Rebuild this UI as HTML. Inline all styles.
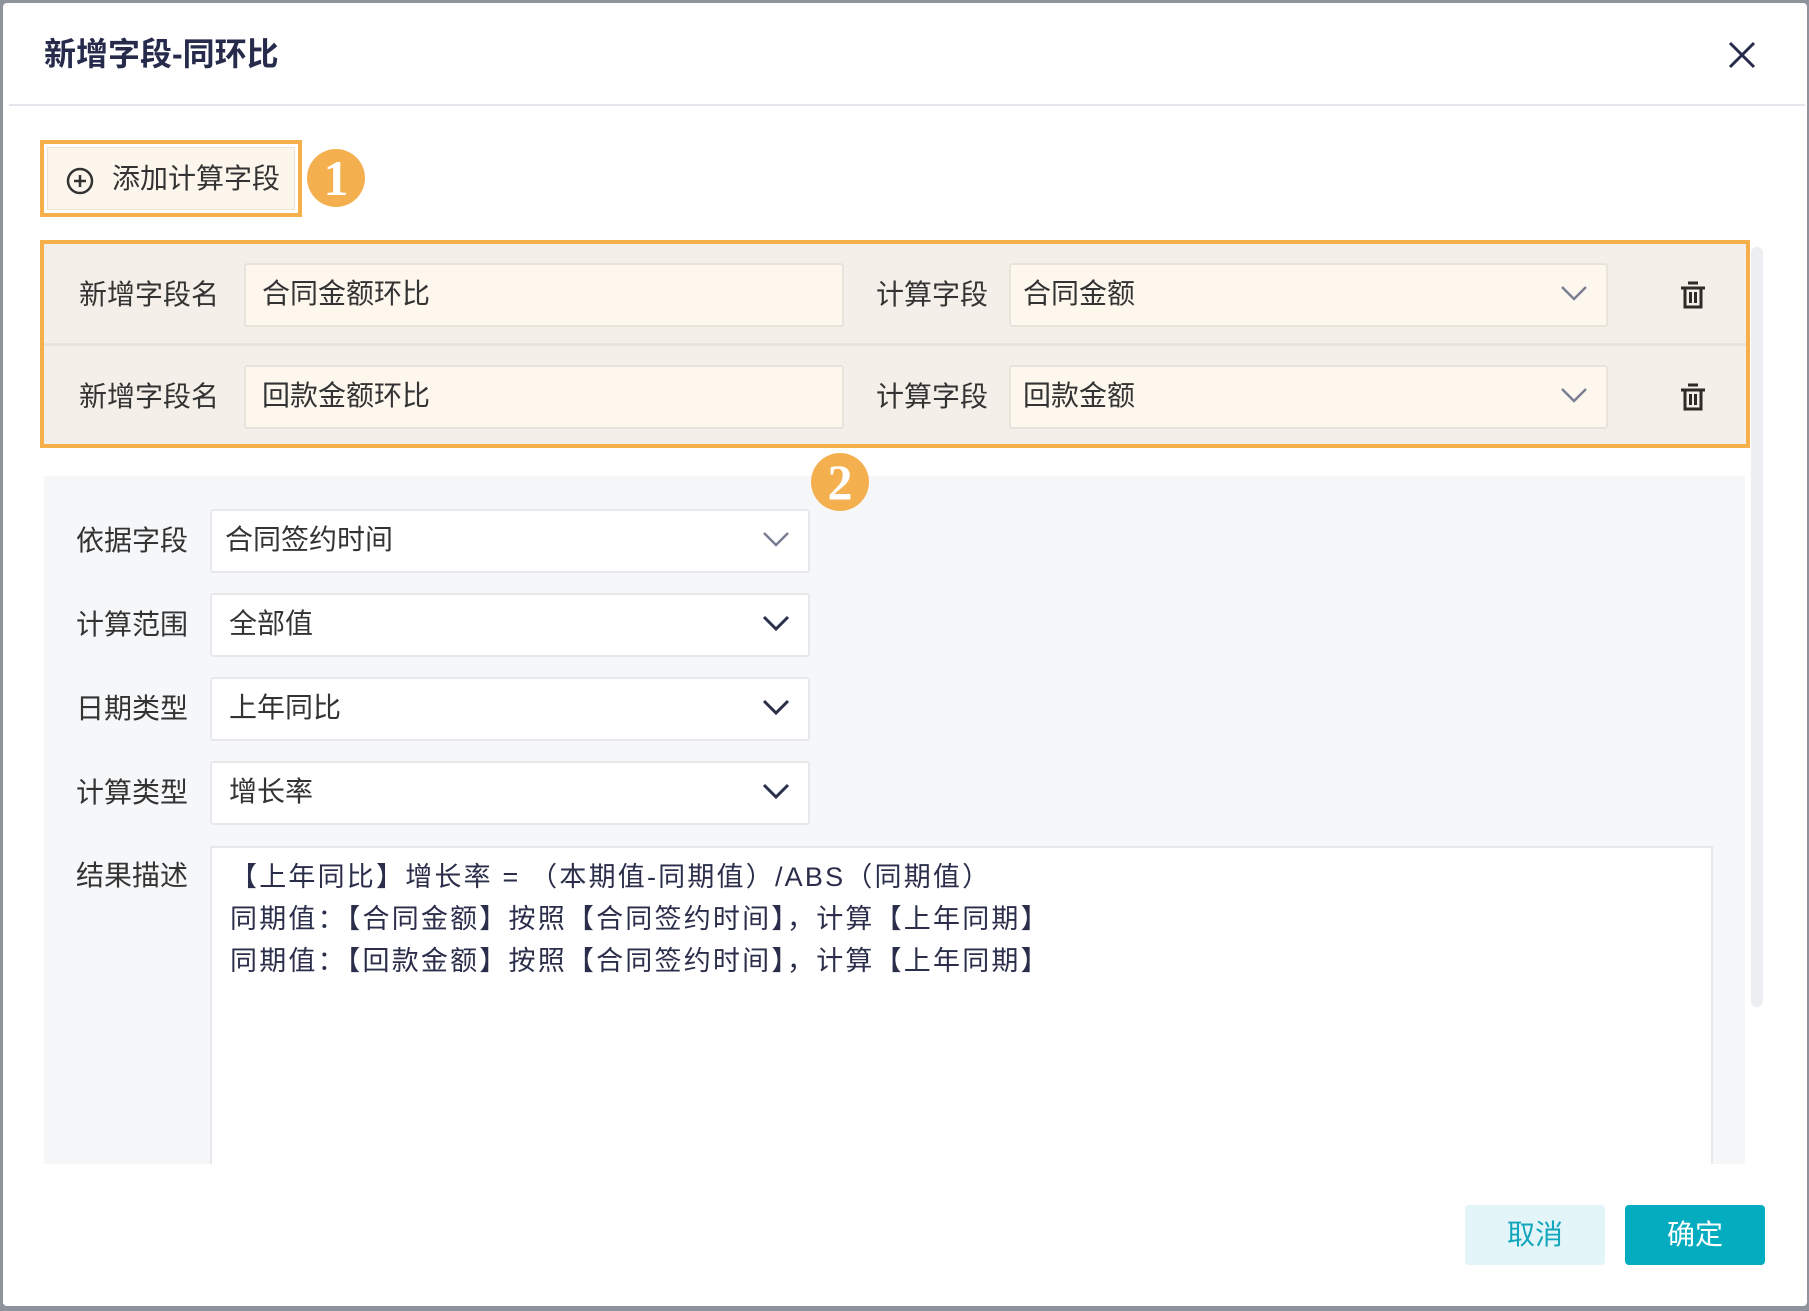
<!DOCTYPE html>
<html><head><meta charset="utf-8"><style>
*{box-sizing:border-box;margin:0;padding:0}
body{width:1809px;height:1311px;background:#8e939c;font-family:"Liberation Sans","Noto Sans CJK SC",sans-serif;position:relative;overflow:hidden}
.dlg{position:absolute;left:3px;top:3px;width:1804px;height:1303px;background:#fff;border-radius:4px}
.wrap{position:absolute;left:-3px;top:-3px;width:1809px;height:1306px}
.abs{position:absolute}
.title{left:44px;top:34px;font-size:32px;font-weight:bold;color:#262b4b;line-height:40px}
.hr{left:9px;top:104px;width:1796px;height:2px;background:#e4e5ea}
.add{left:40px;top:140px;width:262px;height:77px;border:4px solid #f5b04c;background:#fff}
.add .in{position:absolute;left:3px;top:3px;right:3px;bottom:3px;background:#fdf6ec;border:1px solid #ebe3d6;font-size:28px;color:#333;line-height:62px;padding-left:64px}
.badge{width:58px;height:58px;border-radius:50%;background:#f4b04f;color:#fff;font-family:"Liberation Serif",serif;font-weight:bold;font-size:50px;text-align:center;line-height:58px}
.box{left:40px;top:240px;width:1710px;height:208px;border:4px solid #f5b04c;background:#f4efe8}
.lbl{font-size:28px;color:#333;line-height:36px}
.inp{background:#fdf7ee;border:2px solid #e8e3db;border-radius:3px;font-size:28px;color:#333;line-height:58px;padding-left:16px}
.sel{background:#fff;border:2px solid #e6e8ec;border-radius:3px;font-size:28px;color:#333;line-height:58px;padding-left:14px}
.chev{position:absolute;right:18px;top:18px}
.panel{left:44px;top:476px;width:1701px;height:688px;background:#f6f7f9}
.ta{left:210px;top:846px;width:1503px;height:318px;background:#fff;border:2px solid #e6e8ec;border-bottom:none;font-size:27px;color:#2a2e4a;line-height:42px;padding:8px 0 0 18px;letter-spacing:2.2px;white-space:pre}
.btn{top:1205px;width:140px;height:60px;border-radius:4px;font-size:28px;text-align:center;line-height:60px}
</style></head><body>
<div class="dlg"><div class="wrap">
<div class="abs title">新增字段-同环比</div>
<svg class="abs" style="left:1727px;top:40px" width="30" height="30" viewBox="0 0 30 30"><path d="M3 3L27 27M27 3L3 27" stroke="#262b4b" stroke-width="3"/></svg>
<div class="abs hr"></div>

<div class="abs add"><div class="in">添加计算字段</div>
<svg class="abs" style="left:22px;top:23px" width="28" height="28" viewBox="0 0 28 28"><circle cx="14" cy="14" r="12" fill="none" stroke="#333" stroke-width="2.5"/><path d="M14 8V20M8 14H20" stroke="#333" stroke-width="2.5"/></svg></div>
<div class="abs badge" style="left:307px;top:149px">1</div>

<div class="abs" style="left:1751px;top:247px;width:12px;height:760px;background:#eceef1;border-radius:6px"></div>

<div class="abs box">
 <div class="abs" style="left:0;top:99px;width:1702px;height:3px;background:#e9e4dd"></div>
 <div class="abs lbl" style="left:35px;top:33px">新增字段名</div>
 <div class="abs inp" style="left:200px;top:19px;width:600px;height:64px">合同金额环比</div>
 <div class="abs lbl" style="left:832px;top:33px">计算字段</div>
 <div class="abs inp" style="left:965px;top:19px;width:599px;height:64px;padding-left:12px">合同金额<svg class="chev" width="28" height="20" viewBox="0 0 28 20"><path d="M2 4L14 16L26 4" fill="none" stroke="#7a7f92" stroke-width="2.5"/></svg></div>
 <svg class="abs" style="left:1636px;top:37px" width="26" height="28" viewBox="0 0 26 28"><path d="M8 2H18M1 7H25M5 7V26H21V7M10.5 11V22M15.5 11V22" fill="none" stroke="#2f2a25" stroke-width="3"/></svg>
 <div class="abs lbl" style="left:35px;top:135px">新增字段名</div>
 <div class="abs inp" style="left:200px;top:121px;width:600px;height:64px">回款金额环比</div>
 <div class="abs lbl" style="left:832px;top:135px">计算字段</div>
 <div class="abs inp" style="left:965px;top:121px;width:599px;height:64px;padding-left:12px">回款金额<svg class="chev" width="28" height="20" viewBox="0 0 28 20"><path d="M2 4L14 16L26 4" fill="none" stroke="#7a7f92" stroke-width="2.5"/></svg></div>
 <svg class="abs" style="left:1636px;top:139px" width="26" height="28" viewBox="0 0 26 28"><path d="M8 2H18M1 7H25M5 7V26H21V7M10.5 11V22M15.5 11V22" fill="none" stroke="#2f2a25" stroke-width="3"/></svg>
</div>

<div class="abs panel"></div>
<div class="abs badge" style="left:811px;top:453px">2</div>

<div class="abs lbl" style="left:76px;top:523px">依据字段</div>
<div class="abs sel" style="left:210px;top:509px;width:600px;height:64px;padding-left:13px">合同签约时间<svg class="chev" width="28" height="20" viewBox="0 0 28 20"><path d="M2 4L14 16L26 4" fill="none" stroke="#7a7f92" stroke-width="2.5"/></svg></div>
<div class="abs lbl" style="left:76px;top:607px">计算范围</div>
<div class="abs sel" style="left:210px;top:593px;width:600px;height:64px;padding-left:17px">全部值<svg class="chev" width="28" height="20" viewBox="0 0 28 20"><path d="M2 4L14 16L26 4" fill="none" stroke="#2a2e4a" stroke-width="3"/></svg></div>
<div class="abs lbl" style="left:76px;top:691px">日期类型</div>
<div class="abs sel" style="left:210px;top:677px;width:600px;height:64px;padding-left:17px">上年同比<svg class="chev" width="28" height="20" viewBox="0 0 28 20"><path d="M2 4L14 16L26 4" fill="none" stroke="#2a2e4a" stroke-width="3"/></svg></div>
<div class="abs lbl" style="left:76px;top:775px">计算类型</div>
<div class="abs sel" style="left:210px;top:761px;width:600px;height:64px;padding-left:17px">增长率<svg class="chev" width="28" height="20" viewBox="0 0 28 20"><path d="M2 4L14 16L26 4" fill="none" stroke="#2a2e4a" stroke-width="3"/></svg></div>
<div class="abs lbl" style="left:76px;top:858px">结果描述</div>
<div class="abs ta">【上年同比】增长率 = （本期值-同期值）/ABS（同期值）
同期值：【合同金额】按照【合同签约时间】，计算【上年同期】
同期值：【回款金额】按照【合同签约时间】，计算【上年同期】</div>
<div class="abs" style="left:3px;top:1164px;width:1801px;height:140px;background:#fff"></div>

<div class="abs btn" style="left:1465px;background:#e3f5f8;color:#11a6bb">取消</div>
<div class="abs btn" style="left:1625px;background:#03adbf;color:#fff">确定</div>
</div></div>
</body></html>
